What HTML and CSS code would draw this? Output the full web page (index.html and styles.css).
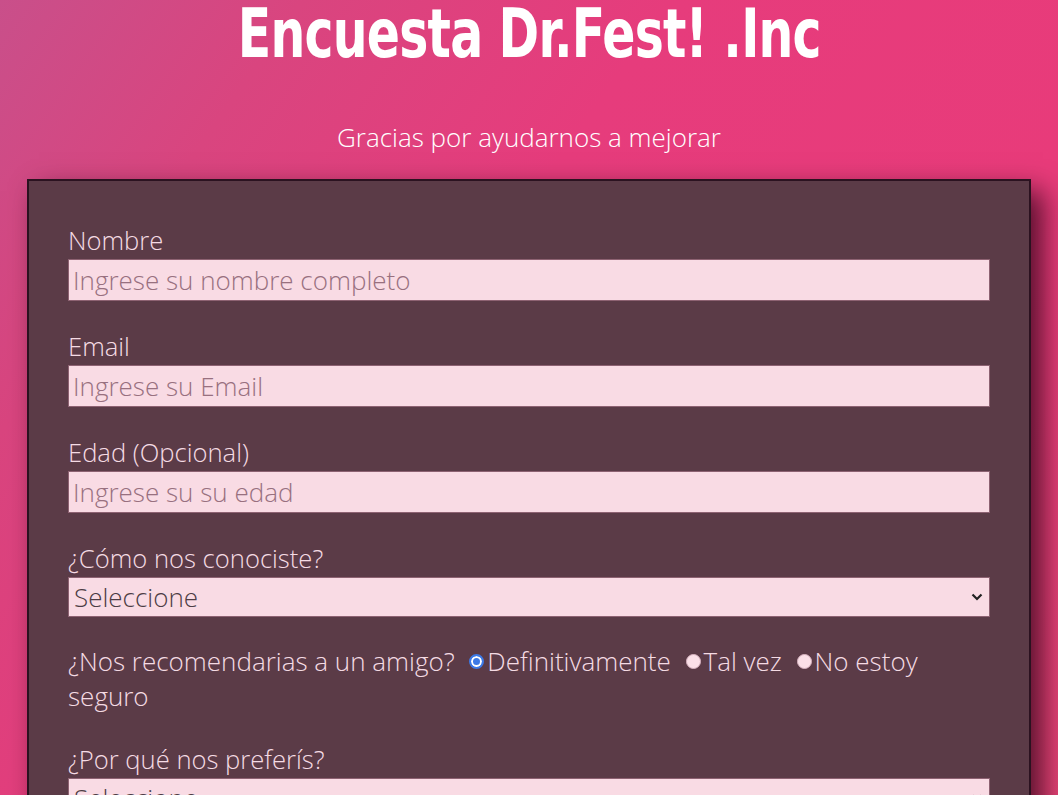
FILE: index.html
```html
<!DOCTYPE html>
<html lang="es">
<head>
<meta charset="utf-8">
<title>Encuesta Dr.Fest! .Inc</title>
<link rel="stylesheet" href="styles.css">
</head>
<body>
<header class="header">
  <h1 class="title"><span class="title-text">Encuesta Dr.Fest! .Inc</span></h1>
  <p class="subtitle">Gracias por ayudarnos a mejorar</p>
</header>
<form class="card">
  <div class="group">
    <label class="label" for="name">Nombre</label>
    <input class="field" id="name" type="text" placeholder="Ingrese su nombre completo">
  </div>
  <div class="group">
    <label class="label" for="email">Email</label>
    <input class="field" id="email" type="email" placeholder="Ingrese su Email">
  </div>
  <div class="group">
    <label class="label" for="age">Edad (Opcional)</label>
    <input class="field" id="age" type="text" placeholder="Ingrese su su edad">
  </div>
  <div class="group">
    <label class="label" for="how">¿Cómo nos conociste?</label>
    <select class="field select" id="how"><option>Seleccione</option></select>
  </div>
  <div class="group radios">
    ¿Nos recomendarias a un amigo? <label class="opt"><input class="radio" type="radio" name="rec" checked>Definitivamente</label> <label class="opt"><input class="radio" type="radio" name="rec">Tal vez</label> <label class="opt"><input class="radio" type="radio" name="rec">No estoy</label> seguro
  </div>
  <div class="group">
    <label class="label" for="why">¿Por qué nos preferís?</label>
    <select class="field select" id="why"><option>Seleccione</option></select>
  </div>
</form>
</body>
</html>
```
FILE: styles.css
```css
html, body { margin: 0; padding: 0; }
body {
  min-height: 795px;
  background: linear-gradient(125deg, #c94f8a 0%, #d9457f 18%, #e63c7c 40%, #e83b7a 70%, #e64676 100%);
  font-family: "Open Sans", "Noto Sans", sans-serif;
  font-weight: 300;
  overflow: hidden;
}
.header { text-align: center; color: #fff; }
.title {
  margin: 0;
  font-family: "DejaVu Sans Condensed", "Liberation Sans", sans-serif;
  font-weight: 700;
  font-size: 68px;
  line-height: 68px;
  letter-spacing: -1px;
}
.title-text { display: inline-block; transform: scaleX(0.80); }
.subtitle { margin: 49px 0 0; font-size: 26px; line-height: 40px; }
.card {
  margin: 22px 27px 0;
  background: #5b3b47;
  border: 2px solid #2b1220;
  padding: 42px 39px 40px 39px;
  box-shadow: 12px 12px 26px rgba(40, 0, 20, 0.75);
  color: #f5dbe4;
}
.group { margin-bottom: 28px; font-size: 25.6px; line-height: 36px; }
.label { display: block; font-size: 25.6px; line-height: 36px; }
.field {
  display: block;
  box-sizing: border-box;
  width: 100%;
  height: 42px;
  margin: 0;
  padding: 0 4px;
  border: 1px solid #8d6272;
  background-color: #f9dbe4;
  font-family: inherit;
  font-weight: 300;
  font-size: 26px;
  color: #4d3d44;
}
.field::placeholder { color: #98707f; }
.select {
  height: 40px;
  padding: 0 30px 0 5px;
  appearance: none;
  -webkit-appearance: none;
  border-radius: 0;
  background-image: url("data:image/svg+xml;utf8,<svg xmlns='http://www.w3.org/2000/svg' width='12' height='8' viewBox='0 0 12 8'><path d='M1.5 1.5 L6 6 L10.5 1.5' fill='none' stroke='%23222' stroke-width='2.2'/></svg>");
  background-repeat: no-repeat;
  background-position: right 6px center;
}
.radios { font-size: 26px; line-height: 35px; margin-top: -1px; }
.opt { white-space: nowrap; }
.radio {
  appearance: none;
  -webkit-appearance: none;
  box-sizing: border-box;
  width: 15px;
  height: 15px;
  margin: 0 3px 0 8px;
  border-radius: 50%;
  border: 1px solid #d8b4c1;
  background: #fbe0e8;
  vertical-align: 2px;
}
.radio:checked {
  background: #3c79e6;
  border: 2px solid #3c79e6;
  box-shadow: inset 0 0 0 2px #ffffff;
}
```
